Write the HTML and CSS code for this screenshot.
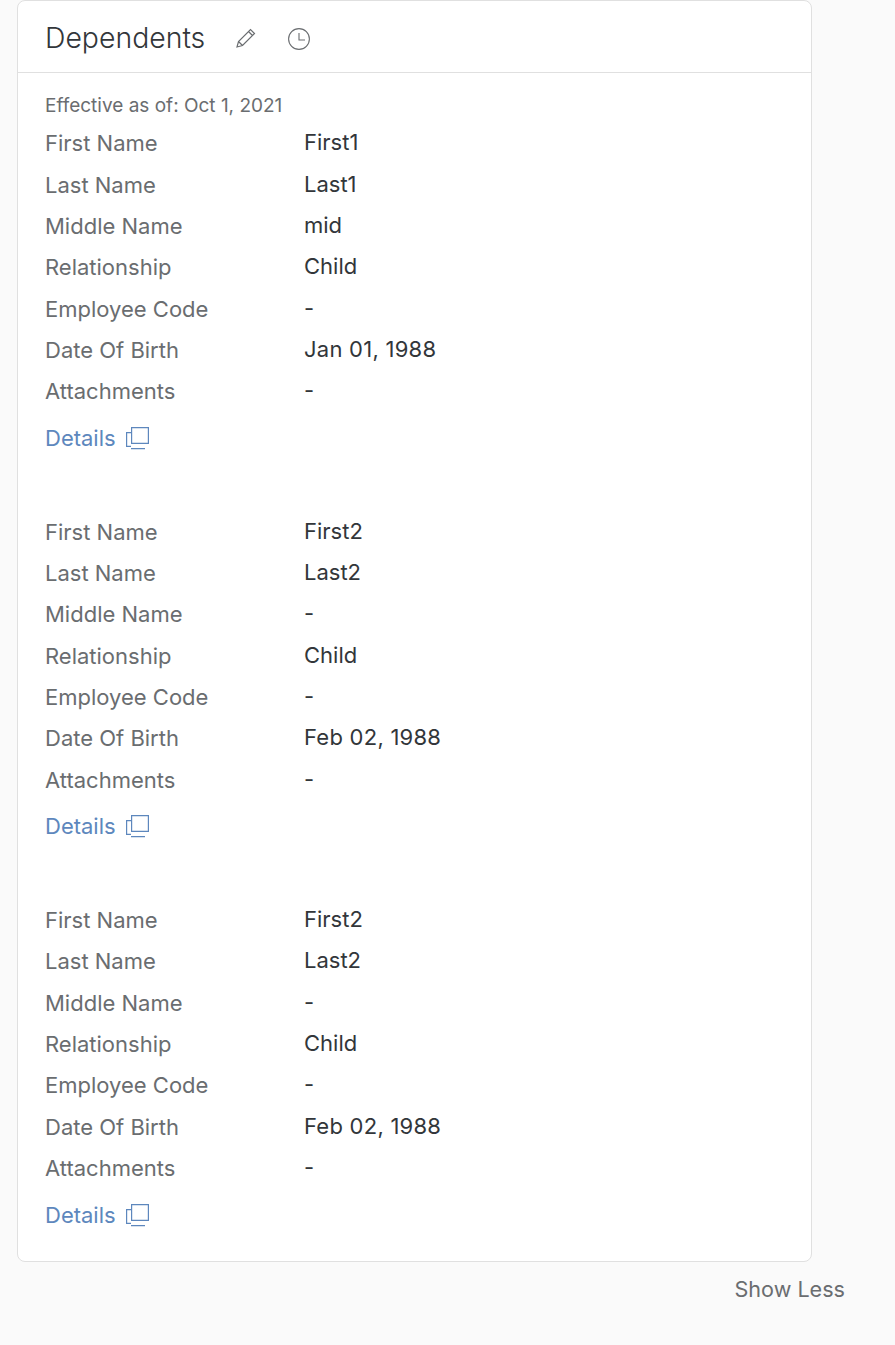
FILE: index.html
```html
<!DOCTYPE html>
<html lang="en">
<head>
<meta charset="utf-8">
<title>Dependents</title>
<link rel="stylesheet" href="styles.css">
</head>
<body>
<svg class="sprites" width="0" height="0" aria-hidden="true">
  <symbol id="details-icon" viewBox="0 0 24 24">
    <path d="M6.6 1.6H23.4V17.4H6.6Z M6 6.6H1.6V20.4H6 M6 22.6H20" fill="none" stroke="currentColor" stroke-width="1.2"/>
  </symbol>
</svg>
<main class="page">
  <section class="card">
    <header class="card-header">
      <h1 class="card-title">Dependents</h1>
      <svg class="icon-edit" viewBox="0 0 20 20" aria-hidden="true">
        <path d="M1 19L2.5 13.5L14.5 1.5L18.5 5.5L6.5 17.5Z M12.5 3.5L16.5 7.5 M2.5 13.5L6.5 17.5" fill="none" stroke="currentColor" stroke-width="1.2"/>
      </svg>
      <svg class="icon-history" viewBox="0 0 22 22" aria-hidden="true">
        <circle cx="11" cy="11" r="10.4" fill="none" stroke="currentColor" stroke-width="1.1"/>
        <path d="M11 5V12H17" fill="none" stroke="currentColor" stroke-width="1.1"/>
      </svg>
    </header>
    <div class="card-body">
      <p class="effective">Effective as of: Oct 1, 2021</p>
      <article class="dependent">
        <dl class="fields">
          <dt>First Name</dt><dd>First1</dd>
          <dt>Last Name</dt><dd>Last1</dd>
          <dt>Middle Name</dt><dd>mid</dd>
          <dt>Relationship</dt><dd>Child</dd>
          <dt>Employee Code</dt><dd>-</dd>
          <dt>Date Of Birth</dt><dd class="date">Jan 01, 1988</dd>
          <dt>Attachments</dt><dd>-</dd>
        </dl>
        <a class="details" href="#">Details <svg class="icon-details"><use href="#details-icon"/></svg></a>
      </article>
      <article class="dependent">
        <dl class="fields">
          <dt>First Name</dt><dd>First2</dd>
          <dt>Last Name</dt><dd>Last2</dd>
          <dt>Middle Name</dt><dd>-</dd>
          <dt>Relationship</dt><dd>Child</dd>
          <dt>Employee Code</dt><dd>-</dd>
          <dt>Date Of Birth</dt><dd class="date">Feb 02, 1988</dd>
          <dt>Attachments</dt><dd>-</dd>
        </dl>
        <a class="details" href="#">Details <svg class="icon-details"><use href="#details-icon"/></svg></a>
      </article>
      <article class="dependent">
        <dl class="fields">
          <dt>First Name</dt><dd>First2</dd>
          <dt>Last Name</dt><dd>Last2</dd>
          <dt>Middle Name</dt><dd>-</dd>
          <dt>Relationship</dt><dd>Child</dd>
          <dt>Employee Code</dt><dd>-</dd>
          <dt>Date Of Birth</dt><dd class="date">Feb 02, 1988</dd>
          <dt>Attachments</dt><dd>-</dd>
        </dl>
        <a class="details" href="#">Details <svg class="icon-details"><use href="#details-icon"/></svg></a>
      </article>
    </div>
  </section>
  <div class="card-footer"><a class="show-less" href="#">Show Less</a></div>
</main>
</body>
</html>
```
FILE: styles.css
```css
* { box-sizing: border-box; }
html, body { margin: 0; padding: 0; }
body {
  background: #fafafa;
  font-family: "Inter", sans-serif;
  color: #32363a;
}
.sprites { position: absolute; }
.page { width: 895px; height: 1345px; padding-left: 17px; }
.card {
  width: 795px;
  height: 1262px;
  background: #fff;
  border: 1px solid #e0e0e0;
  border-radius: 8px;
}
.card-header {
  display: flex;
  align-items: center;
  height: 72px;
  padding: 3px 0 0 27px;
  border-bottom: 1px solid #e0e0e0;
}
.card-title { margin: 0; font-size: 28.4px; font-weight: 300; line-height: 68px; color: #32363a; }
.icon-edit { width: 20px; height: 20px; margin-left: 31px; color: #6a6d70; }
.icon-history { width: 22px; height: 22px; margin: 1px 0 0 32px; color: #6a6d70; }
.card-body { padding: 20px 27px 0; }
.effective { margin: 0 0 4.3px; font-size: 19px; line-height: 26px; color: #6a6d70; }
.dependent { height: 388.3px; }
.fields {
  display: grid;
  grid-template-columns: 259px 1fr;
  grid-auto-rows: 41.33px;
  margin: 0;
  font-size: 22px;
  line-height: 41.33px;
}
.fields dt { color: #6a6d70; }
.fields dd { margin: 0; color: #32363a; position: relative; top: -1px; }
.fields .date { letter-spacing: 0.25px; }
.details {
  display: flex;
  align-items: center;
  gap: 9px;
  height: 47.6px;
  margin-top: 1.8px;
  font-size: 22px;
  color: #5d87bd;
  text-decoration: none;
}
.icon-details { width: 24px; height: 24px; color: #5d87bd; }
.card-footer { display: flex; justify-content: flex-end; padding: 13px 50px 0 0; width: 878px; }
.show-less { font-size: 21.6px; line-height: 28px; color: #6a6d70; text-decoration: none; }
```
